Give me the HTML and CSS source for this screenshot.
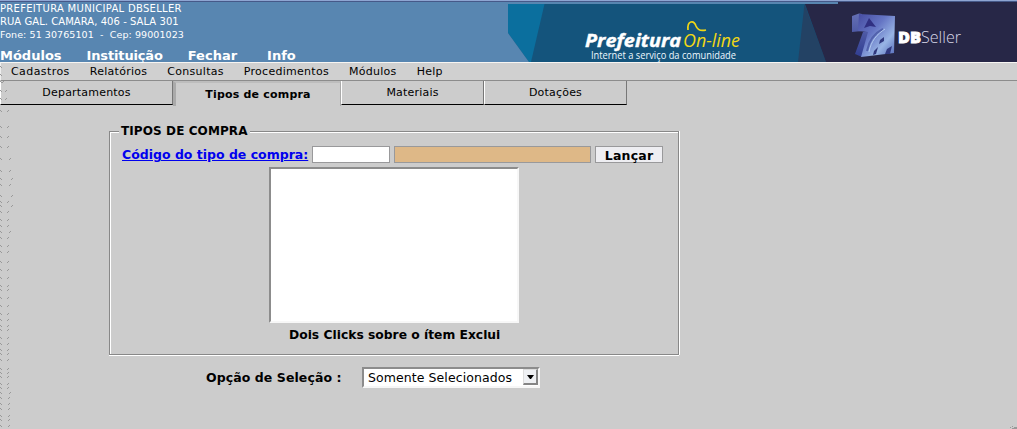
FILE: index.html
```html
<!DOCTYPE html>
<html lang="pt-BR">
<head>
<meta charset="utf-8">
<title>Prefeitura On-line</title>
<link rel="stylesheet" href="styles.css">
</head>
<body>
<header class="header">
  <div class="identity">
    <div class="address"><div class="company">PREFEITURA MUNICIPAL DBSELLER</div><div class="street">RUA GAL. CAMARA, 406 - SALA 301</div><div class="phone">Fone: 51 30765101 &nbsp;-&nbsp; Cep: 99001023</div></div>
    <nav class="main-nav"><a>Módulos</a><a class="institution">Instituição</a><a>Fechar</a><a class="info">Info</a></nav>
  </div>
  <svg class="banner" width="509" height="62" viewBox="508 0 509 62">
    <defs>
      <linearGradient id="cube" x1="0" y1="0" x2="1" y2="1"><stop offset="0" stop-color="#454ba0"/><stop offset=".4" stop-color="#6575c4"/><stop offset=".7" stop-color="#98b4e5"/><stop offset="1" stop-color="#5065b5"/></linearGradient>
      <linearGradient id="side" x1="0" y1="0" x2="0" y2="1"><stop offset="0" stop-color="#6570b5"/><stop offset="1" stop-color="#303d91"/></linearGradient>
    </defs>
    <path fill="#14547c" d="M508 4H1017V62H508z"/>
    <path fill="#0b6f9e" d="M508 4H544.500L531 62H529L508 33z"/>
    <path fill="#5886b1" d="M508 33L529 62H508z"/>
    <path fill="#234264" d="M804.500 4L798 62H826z"/>
    <path fill="#272747" d="M805 4H838V2H1017V62H826z"/>
    <text class="brand" x="585" y="47" textLength="96" lengthAdjust="spacingAndGlyphs">Prefeitura</text>
    <text class="online" x="683" y="47" textLength="57" lengthAdjust="spacingAndGlyphs">On-line</text>
    <path d="M688 30C687 20 694 20 696 26C698 31 702 31 706 30" fill="none" stroke="#f2d815" stroke-width="1.700"/>
    <text class="tagline" x="591" y="59" textLength="145" lengthAdjust="spacingAndGlyphs">Internet a serviço da comunidade</text>
    <path fill="url(#side)" d="M852 16L859 13.500L862 14V31L852 32zM863 32L855 54L862 57L870 31z"/>
    <path fill="url(#cube)" d="M859 14L895 16L894 53L861 57L868 32L858 31z"/>
    <path fill="#303082" d="M869 18L876 27L870 26L864 28z"/>
    <path fill="none" stroke="#5262ad" stroke-width="2" d="M883 29C875 33 869 40 867 51"/>
    <path fill="none" stroke="#b2caef" d="M885 29C877 34 871 41 869 52"/>
    <path fill="#30387f" d="M884 37L880 40L879 44L884 41zM892 46L887 49L885 54L890 54zM878 47L874 51L873 55L876 54z"/>
    <text class="db" x="898" y="43" textLength="23" lengthAdjust="spacingAndGlyphs">DB</text>
    <text class="seller" x="921" y="43" textLength="40" lengthAdjust="spacingAndGlyphs">Seller</text>
  </svg>
</header>
<nav class="menu"><a class="records">Cadastros</a><a>Relatórios</a><a>Consultas</a><a>Procedimentos</a><a>Módulos</a><a>Help</a></nav>
<div class="tabs">
  <div class="tab tab-wide">Departamentos</div>
  <div class="tab tab-active">Tipos de compra</div>
  <div class="tab">Materiais</div>
  <div class="tab">Dotações</div>
</div>
<main class="content">
  <fieldset class="panel">
    <legend>TIPOS DE COMPRA</legend>
    <div class="row">
      <a class="link">Código do tipo de compra:</a>
      <input class="code" type="text"><input class="description" type="text" readonly>
      <button class="launch">Lançar</button>
    </div>
    <div class="list"></div>
    <div class="hint">Dois Clicks sobre o ítem Exclui</div>
  </fieldset>
  <div class="selection">
    <span class="selection-label">Opção de Seleção :</span>
    <div class="select"><span>Somente Selecionados</span><div class="arrow"><svg width="7" height="4"><path d="M0 0H7L4 4H3z"/></svg></div></div>
  </div>
</main>
<svg class="speckles" width="1017" height="429"></svg>
<script src="speckles.js"></script>
</body>
</html>
```
FILE: styles.css
```css
* { box-sizing: border-box; }
body { margin: 0; height: 429px; overflow: hidden; position: relative; background: #ccc; color: #000; font-family: "DejaVu Sans", sans-serif; }
.header { height: 62px; display: flex; background: linear-gradient(#8ea5d2 0 1px, #465989 1px 2px, #5886b1 2px); }
.identity { width: 508px; padding-top: 2px; color: #fff; }
.address { height: 45px; line-height: 13px; white-space: nowrap; }
.company { font-size: 10px; letter-spacing: .3px; }
.street { font-size: 10px; letter-spacing: .05px; }
.phone { font-size: 9.5px; letter-spacing: .08px; }
.main-nav { display: flex; gap: 25px; font-size: 13px; font-weight: bold; line-height: 17px; }
.institution { letter-spacing: -.15px; }
.info { margin-left: 5px; }
.banner { display: block; }
.brand { font: italic bold 18px "Open Sans", sans-serif; fill: #fff; stroke: #fff; stroke-width: .4px; }
.online { font: italic 19px "Open Sans", sans-serif; fill: #f2d815; }
.tagline { font: 10px "Open Sans", sans-serif; fill: #eef8ff; }
.db { font: 800 16px "Open Sans", sans-serif; fill: #fff; stroke: #fff; stroke-width: .8px; }
.seller { font: 300 17px "Open Sans", sans-serif; fill: #d8d8e8; }
.menu { height: 19px; border-top: 1px solid #f7f5f2; border-bottom: 1px solid #8c8c8c; border-left: 1px solid #eee; background: #d0d0d0; padding-left: 10px; display: flex; gap: 20px; font-size: 11px; line-height: 17px; letter-spacing: .28px; }
.records { letter-spacing: .42px; }
.tabs { height: 25px; display: flex; font-size: 11px; line-height: 24px; text-align: center; }
.tab { width: 143px; height: 24px; border-left: 1px solid #fff; border-right: 1px solid #777; border-bottom: 1px solid #000; letter-spacing: .2px; }
.tab-wide { width: 173px; }
.tab-active { width: 168px; height: 25px; border: solid #aaa; border-width: 2px 1px 0 3px; font-weight: bold; border-top-color: #bdbdbd; }
.content { padding: 17px 0 0 109px; font-size: 12px; }
.panel { width: 570px; height: 232px; margin: 0; padding: 5px 10px 0; border: 1px solid #888; box-shadow: inset 1px 1px #fff, 0 1px #fff, 1px 0 #fff; font-weight: bold; }
.panel legend { padding: 1px 2px 0; margin-left: -1px; line-height: 15px; letter-spacing: .1px; background: #ccc; }
.row { display: flex; height: 21px; align-items: center; gap: 4px; padding-left: 2px; }
.link { color: #00e; text-decoration: underline; width: 186px; font-size: 12.5px; white-space: nowrap; }
input, button { height: 17px; border: 1px solid #99999b; border-radius: 0; padding: 0; margin: 0; font-family: inherit; }
.code { width: 78px; background: #fff; }
.description { width: 197px; background: #deb887; }
.launch { width: 68px; padding-top: 1px; background: #eeeef2; color: #000; font-size: 12.5px; font-weight: bold; line-height: 15px; letter-spacing: .2px; }
.list { width: 250px; height: 156px; margin: 2px 0 0 149px; background: #fff; border: 2px solid; border-color: #8c8c8c #f7f7f7 #f7f7f7 #8c8c8c; }
.hint { margin: 4px 0 0 169px; line-height: 16px; font-size: 12.3px; white-space: nowrap; }
.selection { display: flex; align-items: center; margin-top: 12px; padding-left: 97px; font-size: 12.5px; letter-spacing: .08px; }
.selection-label { width: 156px; font-weight: bold; white-space: nowrap; }
.select { width: 178px; height: 21px; display: flex; justify-content: space-between; background: #fff; border: 2px solid; border-color: #8c8c8c #f7f7f7 #f7f7f7 #8c8c8c; padding-left: 4px; line-height: 17px; white-space: nowrap; }
.arrow { width: 15px; height: 16px; display: flex; align-items: center; justify-content: center; background: #eef0f3; border: 1px solid #ddd; border-right: 2px solid #858585; border-bottom: 2px solid #858585; }
.speckles { position: absolute; inset: 0; pointer-events: none; shape-rendering: crispEdges; }
```
FILE: speckles.js
```javascript
// Desktop edge specks: pairs of tiny diagonal marks, as [top, right-hand x].
const rows = [[66,-1],[74,-1],[81,2],[90,5],[98,5],[110,7],[126,7],[136,7],[146,7],[158,9],[170,9],[178,11],[184,9],[195,11],[201,7],[205,11],[211,7],[219,7],[225,7],[231,9],[237,7],[245,7],[251,7],[261,7],[269,7],[277,7],[285,7],[289,7],[297,7],[305,7],[313,7],[319,7],[325,7],[329,7],[337,7],[343,7],[349,7],[353,7],[359,7],[368,7],[372,7],[376,7],[383,7],[387,7],[392,9],[397,8],[403,8],[408,8],[415,8],[419,8],[425,8]];
let d = "M1012 426h1v1h-1zM1010 427h1v1h-1zM1014 427h3v2h-5v-1h2z";
for (const [y, x] of rows) {
  d += `M0 ${y}h1v1h-1zM1 ${y + 1}h1v1h-1z`;
  if (x > 0) d += `M${x + 1} ${y}h1v1h-1zM${x} ${y + 1}h1v1h-1z`;
}
const path = document.createElementNS("http://www.w3.org/2000/svg", "path");
path.setAttribute("d", d);
path.setAttribute("fill", "#999");
document.querySelector(".speckles").append(path);
```
